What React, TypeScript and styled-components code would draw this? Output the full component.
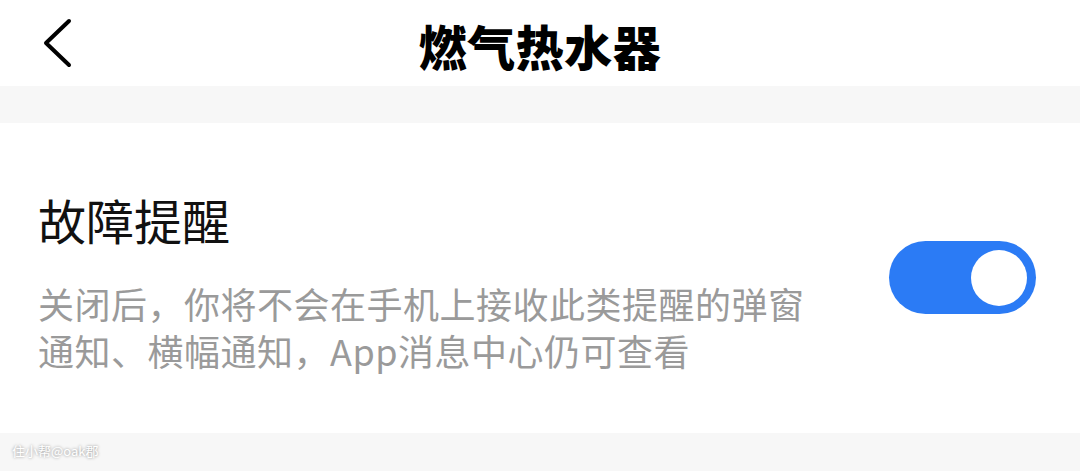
import styled, { createGlobalStyle } from "styled-components";

const GlobalStyle = createGlobalStyle`
    html, body {
        margin: 0;
        padding: 0;
        background-color: #f7f7f7;
        font-family: "Noto Sans CJK SC", "Noto Sans", sans-serif;
    }
`;

const Page = styled.div`
    position: relative;
    width: 1080px;
    height: 471px;
    background-color: #f7f7f7;
    overflow: hidden;
`;

const Header = styled.div`
    height: 86px;
    background-color: #fff;
    display: grid;
    grid-template-columns: 120px 1fr 120px;
    align-items: center;
`;

const BackButton = styled.button`
    background: none;
    border: none;
    padding: 0 0 0 40px;
    height: 86px;
    display: flex;
    align-items: center;
    cursor: pointer;
`;

const Title = styled.h1`
    margin: 0;
    padding-top: 5px;
    text-align: center;
    font-size: 48px;
    font-weight: 900;
    color: #000;
    line-height: 81px;
    letter-spacing: 0.5px;
`;

const Card = styled.div`
    margin-top: 37px;
    height: 310px;
    box-sizing: border-box;
    background-color: #fff;
    padding: 66px 44px 0 38px;
    display: flex;
    justify-content: space-between;
    align-items: flex-start;
`;

const TextBlock = styled.div`
    display: flex;
    flex-direction: column;
    gap: 31px;
`;

const ItemTitle = styled.div`
    font-size: 48px;
    line-height: 60px;
    color: #111;
`;

const ItemDesc = styled.div`
    width: 780px;
    font-size: 36px;
    line-height: 47px;
    letter-spacing: 0.5px;
    color: #9a9a9a;
`;

const Track = styled.div<{ $on: boolean }>`
    margin-top: 52px;
    width: 147px;
    height: 73px;
    border-radius: 37px;
    background-color: ${(p) => (p.$on ? "#2b7bf5" : "#d8d8d8")};
    display: flex;
    align-items: center;
    justify-content: ${(p) => (p.$on ? "flex-end" : "flex-start")};
    padding: 0 9px;
    box-sizing: border-box;
`;

const Knob = styled.div`
    width: 56px;
    height: 56px;
    border-radius: 50%;
    background-color: #fff;
`;

const Watermark = styled.div`
    position: absolute;
    left: 12px;
    top: 441px;
    font-size: 13px;
    color: #fff;
    text-shadow: 0 0 3px rgba(0, 0, 0, 0.45);
`;

export default function App() {
    return (
        <Page>
            <GlobalStyle />
            <Header>
                <BackButton>
                    <svg width="34" height="50" viewBox="0 0 34 50">
                        <path d="M29 3 L6 25 L29 47" fill="none" stroke="#000" strokeWidth="4" strokeLinecap="round" strokeLinejoin="round" />
                    </svg>
                </BackButton>
                <Title>燃气热水器</Title>
                <div />
            </Header>
            <Card>
                <TextBlock>
                    <ItemTitle>故障提醒</ItemTitle>
                    <ItemDesc>关闭后，你将不会在手机上接收此类提醒的弹窗通知、横幅通知，App消息中心仍可查看</ItemDesc>
                </TextBlock>
                <Track $on={true}>
                    <Knob />
                </Track>
            </Card>
            <Watermark>住小帮@oak郡</Watermark>
        </Page>
    );
}
